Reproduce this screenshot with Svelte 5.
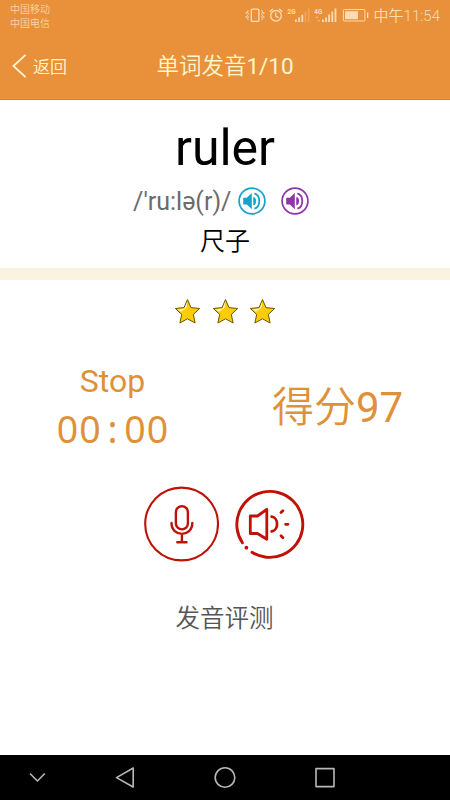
<script>
  const stars = [0, 1, 2];
  const clock = ['0', '0', ':', '0', '0'];
  const voices = ['#16a3cb', '#8f35a6'];
</script>

<div class="screen">
  <header>
    <div class="status">
      <div class="carriers">
        <span>中国移动</span>
        <span>中国电信</span>
      </div>
      <div class="indicators">
        <svg width="126" height="24" viewBox="0 0 126 24">
          <g fill="none" stroke="#fbdcb6" stroke-width="1.3">
            <rect x="6.3" y="9.2" width="7.6" height="12.2" rx="1" />
            <path d="M3.4 10l-1 2 1 1.5-1 2 1 1.5-1 1.5 1 1.5M1.2 12v2M1.2 16v2M16.6 10l1 2-1 1.5 1 2-1 1.5 1 1.5-1 1.5M18.8 12v2M18.8 16v2" stroke-width="1" />
            <circle cx="31" cy="15.8" r="5.3" />
            <path d="M30.8 12.5v3.6l2.8 1.6M24.7 11.7l3.2-2.8M34.1 8.9l3.2 2.8" />
          </g>
          <g fill="#fbdcb6">
            <path d="M50 19.5h1.8V22H50zM53.2 17.5H55V22h-1.8zM56.4 14.7h1.8V22h-1.8z" />
            <path d="M59.7 11.5h1.6V22h-1.6zM62.8 8.5h1.6V22h-1.6z" opacity=".28" />
            <path d="M77 19.5h1.8V22H77zM80.1 17.5h1.8V22h-1.8zM83.2 14.5H85V22h-1.8zM86.4 11.5h1.8V22h-1.8zM89.6 8.5h1.8V22h-1.8z" />
            <path d="M70.5 18l1.5-2 1.5 2zM72.3 20h3l-1.5 2z" opacity=".5" />
            <rect x="100" y="11.2" width="13" height="8" />
            <rect x="122" y="12.5" width="1.3" height="5.5" />
          </g>
          <rect x="98.4" y="9.5" width="21.5" height="11.5" rx="1" fill="none" stroke="#fbdcb6" />
          <text x="42.5" y="13.8" textLength="8" lengthAdjust="spacingAndGlyphs">2G</text>
          <text x="69.3" y="13.8" textLength="8" lengthAdjust="spacingAndGlyphs">4G</text>
        </svg>
        <span class="time">中午11:54</span>
      </div>
    </div>
    <nav>
      <div class="back">
        <svg width="16" height="26" viewBox="0 0 16 26"><path d="M13.6 1.8L1.4 13l12.2 11.2" fill="none" stroke="#fff6d8" stroke-width="1.7" /></svg>
        <span>返回</span>
      </div>
      <h1>单词发音<span class="latin">1/10</span></h1>
    </nav>
  </header>

  <section class="word">
    <div class="term">ruler</div>
    <div class="phonetic">
      <span class="ipa">/'ru:lə(r)/</span>
      {#each voices as color}
        <svg width="28" height="28" viewBox="0 0 28 28">
          <circle cx="14" cy="14" r="12.9" fill="none" stroke={color} stroke-width="1.7" />
          <path d="M5.2 10.7h3.6l5-4.8v16.4l-5-4.8H5.2z" fill={color} />
          <path d="M15.8 10.3c2.4 1.2 2.4 6.5 0 7.7z" fill={color} stroke={color} />
          <path d="M16.4 6.3c6.5 2 6.5 13.4 0 15.4" fill="none" stroke={color} stroke-width="1.8" />
        </svg>
      {/each}
    </div>
    <div class="meaning">尺子</div>
  </section>

  <div class="divider"></div>

  <section class="stars">
    {#each stars as star}
      <svg width="27" height="27" viewBox="0 0 27 27">
        <path d="M13.5 1.6L17 9.6l8.7.9-6.4 5.9 1.8 8.6-7.6-4.2L5.9 25l1.8-8.6-6.4-5.9 8.7-.9z" fill="#fccd05" stroke="#68540b" stroke-linejoin="round" />
        <path d="M13 4.2L10.6 10.4 4 11.5l3 2.6c1-2.2 5-2 6-5.6z" fill="#fff6ae" />
      </svg>
    {/each}
  </section>

  <section class="results">
    <div class="timer">
      <div class="state">Stop</div>
      <div class="clock">{#each clock as c}<span>{c}</span>{/each}</div>
    </div>
    <div class="score">得分<span class="latin">97</span></div>
  </section>

  <section class="actions">
    <svg width="76" height="76" viewBox="0 0 76 76" fill="none" stroke="#c01109">
      <circle cx="38.6" cy="38" r="36.4" stroke-width="2.1" />
      <g stroke-width="2.4" stroke-linecap="round">
        <rect x="32.9" y="20.2" width="12" height="23.2" rx="6" />
        <path d="M28.5 37c0 14.5 20.8 14.5 20.8 0M38.9 48v8M34.3 56.3h9.2" />
      </g>
    </svg>
    <svg width="76" height="76" viewBox="0 0 76 76" fill="none" stroke="#c01109" stroke-width="2.9">
      <path d="M11.4 56.8A33 33 0 1 1 21 66.2" stroke-linecap="round" />
      <circle cx="15.4" cy="61.7" r="1.9" fill="#c01109" stroke="none" />
      <g stroke-width="2.8" stroke-linejoin="round" stroke-linecap="round">
        <path d="M19.3 30h7.2l9.3-6.7v30l-9.3-5.8h-7.2z" />
        <path d="M40.6 30.6c7.3.9 7.3 13.8 0 14.7" stroke-width="2.7" />
        <path d="M50 26.6l1.9-1.9M54.6 38.3h2.4M50 49.8l1.9 1.9" />
      </g>
    </svg>
  </section>

  <div class="caption">发音评测</div>

  <footer>
    <svg width="450" height="45" viewBox="0 0 450 45" fill="none" stroke="#b8b8b8" stroke-width="1.6" stroke-linejoin="round">
      <path d="M30 18.5l7.4 7.5 7.4-7.5" />
      <path d="M133.2 13v19L116.5 22.6z" />
      <circle cx="225" cy="22.5" r="9.8" />
      <rect x="316" y="13.6" width="18" height="18" />
    </svg>
  </footer>
</div>

<style>
  :global(body) {
    margin: 0;
    background: #fff;
  }
  .screen {
    width: 450px;
    height: 800px;
    display: flex;
    flex-direction: column;
    background: #fff;
    font-family: Roboto, 'Noto Sans CJK SC', sans-serif;
    white-space: nowrap;
    overflow: hidden;
  }
  header {
    height: 99px;
    background: #e8913a;
    border-bottom: 1px solid #dc7d1c;
  }
  .latin {
    font-weight: 400;
  }
  .status {
    height: 32px;
    display: flex;
    justify-content: space-between;
    padding: 0 10px;
    color: #fbdcb6;
  }
  .carriers {
    display: flex;
    flex-direction: column;
    padding-top: 3px;
    font-size: 10px;
    line-height: 13.5px;
    font-weight: 350;
    color: #fad3a6;
  }
  .indicators {
    display: flex;
  }
  .indicators svg {
    margin-left: -1px;
    margin-right: 1px;
  }
  .indicators text {
    font: 700 7px Roboto, sans-serif;
    fill: #fbdcb6;
  }
  .time {
    font-size: 15px;
    line-height: 33px;
    font-weight: 350;
    margin-left: 2px;
  }
  nav {
    height: 67px;
    display: grid;
    grid-template-columns: 1fr auto 1fr;
    align-items: center;
    color: #fff6d0;
  }
  .back {
    display: flex;
    align-items: center;
    gap: 5px;
    padding-left: 12px;
    font-size: 17px;
    font-weight: 350;
  }
  h1 {
    margin: 0;
    font-size: 22.5px;
    line-height: 30px;
    font-weight: 350;
  }
  .word {
    height: 168px;
    display: flex;
    flex-direction: column;
    align-items: center;
  }
  .term {
    margin-top: 18px;
    font-size: 50px;
    line-height: 60px;
    color: #000;
  }
  .phonetic {
    height: 45px;
    display: flex;
    align-items: center;
    font-size: 25px;
    color: #6b6b6b;
    margin-left: -8px;
  }
  .ipa {
    padding-top: 2px;
  }
  .phonetic svg {
    margin-left: 7px;
  }
  .phonetic svg + svg {
    margin-left: 14.5px;
  }
  .meaning {
    font-size: 25px;
    line-height: 38px;
    font-weight: 350;
    color: #000;
  }
  .divider {
    height: 12px;
    background: #faf3e2;
  }
  .stars {
    height: 63px;
    display: flex;
    justify-content: center;
    align-items: center;
    gap: 10.5px;
  }
  .results {
    display: flex;
    height: 136px;
    color: #df9139;
  }
  .timer {
    width: 225px;
    display: flex;
    flex-direction: column;
    align-items: center;
    padding-top: 18px;
  }
  .state {
    font-size: 32px;
    line-height: 40px;
  }
  .clock {
    display: flex;
    font: 400 37.5px/56px 'Noto Sans', sans-serif;
  }
  .clock span {
    width: 22.5px;
    text-align: center;
  }
  .score {
    width: 225px;
    text-align: center;
    font-size: 42px;
    line-height: 130px;
    font-weight: 350;
  }
  .actions {
    height: 90px;
    display: flex;
    justify-content: center;
    align-items: center;
    gap: 12px;
    margin: 0 0 0 -1px;
  }
  .caption {
    margin: 20px 1px 0 0;
    text-align: center;
    font-size: 24.5px;
    line-height: 60px;
    font-weight: 350;
    color: #555;
  }
  footer {
    margin-top: auto;
    height: 45px;
    background: #000;
  }
  footer svg {
    display: block;
  }
</style>
